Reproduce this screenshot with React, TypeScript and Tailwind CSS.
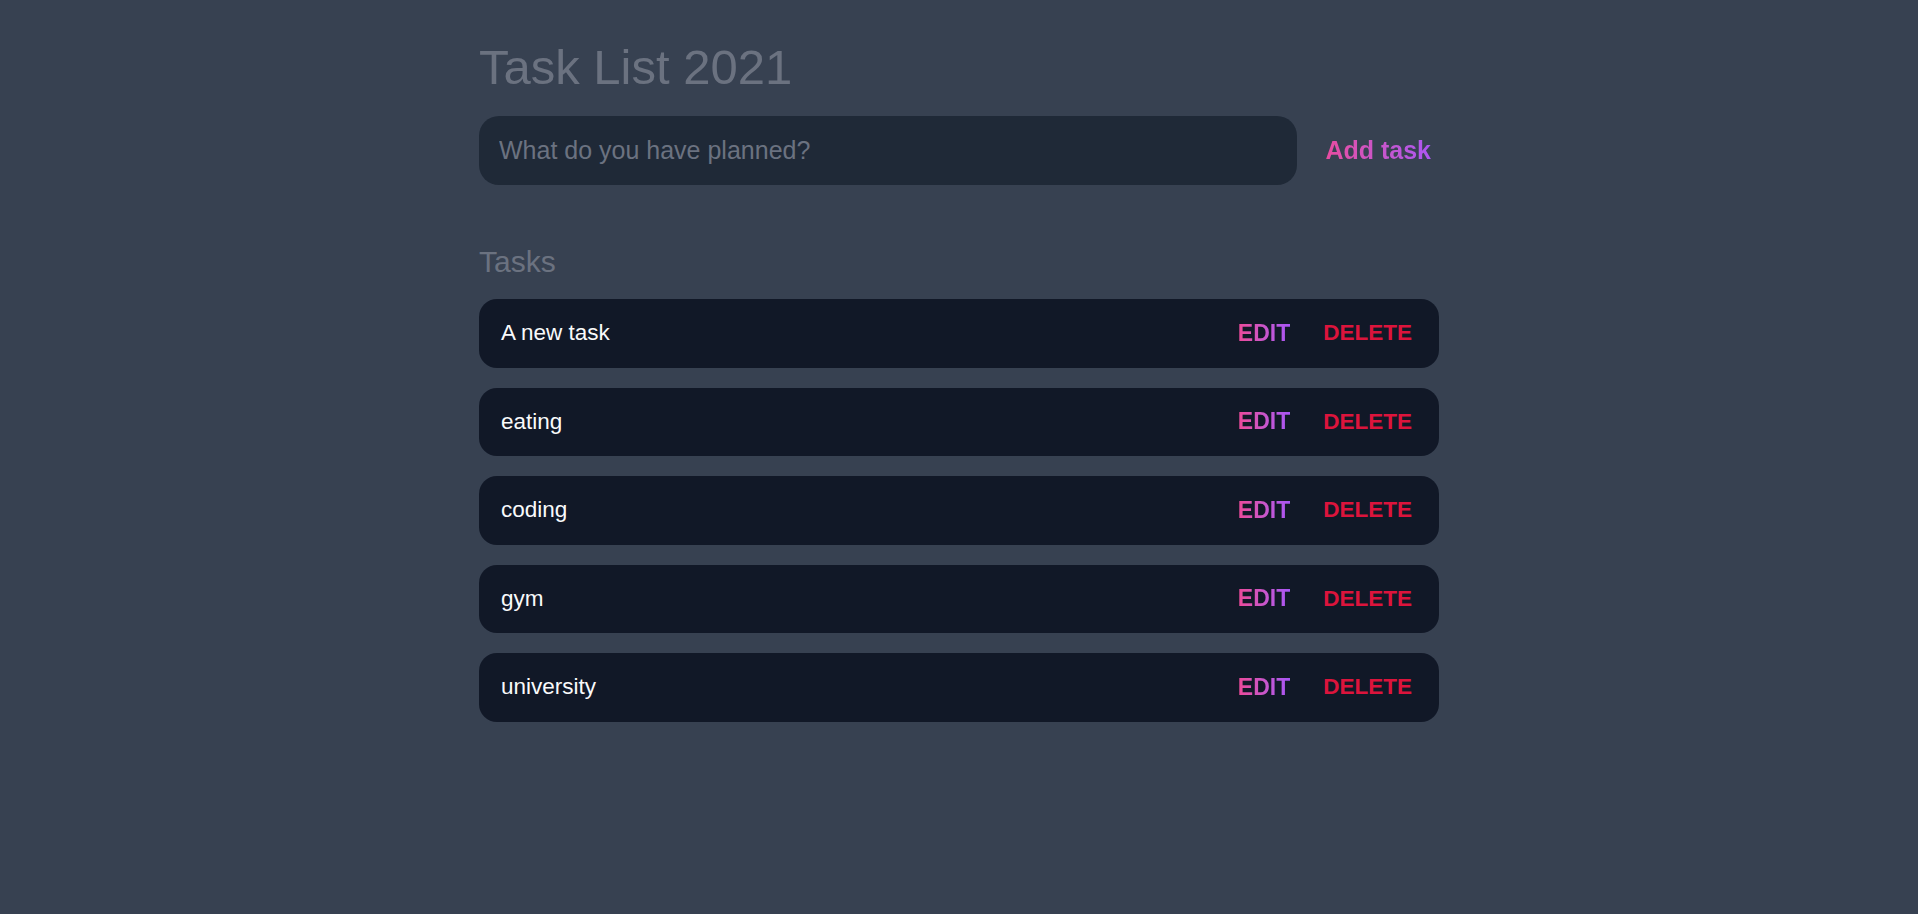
import * as React from "react";

type Task = {
  id: number;
  title: string;
};

const initialTasks: Task[] = [
  { id: 1, title: "A new task" },
  { id: 2, title: "eating" },
  { id: 3, title: "coding" },
  { id: 4, title: "gym" },
  { id: 5, title: "university" },
];

const gradientText =
  "bg-gradient-to-r from-[#ec4899] to-[#a855f7] bg-clip-text text-transparent";

function TaskRow({ task, onDelete }: { task: Task; onDelete: (id: number) => void }) {
  return (
    <li className="flex h-[68.5px] items-center justify-between rounded-[18px] bg-[#111827] pl-[22px] pr-[27px]">
      <span className="text-[22.5px] leading-none text-[#f9fafb]">{task.title}</span>
      <div className="flex items-center gap-[33px]">
        <button type="button" className={`text-[23px] font-bold leading-none ${gradientText}`}>
          EDIT
        </button>
        <button
          type="button"
          onClick={() => onDelete(task.id)}
          className="text-[22.5px] font-bold leading-none text-[#dc143c]"
        >
          DELETE
        </button>
      </div>
    </li>
  );
}

export default function App() {
  const [tasks, setTasks] = React.useState<Task[]>(initialTasks);
  const [draft, setDraft] = React.useState("");

  const addTask = () => {
    if (!draft.trim()) return;
    setTasks((prev) => [...prev, { id: Date.now(), title: draft.trim() }]);
    setDraft("");
  };

  return (
    <div
      className="min-h-[914px] w-full bg-[#374151]"
      style={{ fontFamily: '"Liberation Sans", Arial, sans-serif' }}
    >
      <main className="mx-auto w-[960px] pt-[43px]">
        <h1 className="text-[49px] leading-[48px] text-[#6b7280]">Task List 2021</h1>

        <div className="mt-[25px] flex items-center">
          <input
            value={draft}
            onChange={(e) => setDraft(e.target.value)}
            placeholder="What do you have planned?"
            className="h-[69px] flex-1 rounded-[20px] bg-[#1f2937] px-5 text-[25px] text-[#f9fafb] outline-none placeholder:text-[#6b7280]"
          />
          <button
            type="button"
            onClick={addTask}
            className={`ml-[20px] px-2 text-[25px] font-bold leading-none ${gradientText}`}
          >
            Add task
          </button>
        </div>

        <section className="mt-[62px]">
          <h2 className="text-[30px] leading-[30px] text-[#6b7280]">Tasks</h2>
          <ul className="mt-[22px] flex flex-col gap-5">
            {tasks.map((task) => (
              <TaskRow
                key={task.id}
                task={task}
                onDelete={(id) => setTasks((prev) => prev.filter((t) => t.id !== id))}
              />
            ))}
          </ul>
        </section>
      </main>
    </div>
  );
}
